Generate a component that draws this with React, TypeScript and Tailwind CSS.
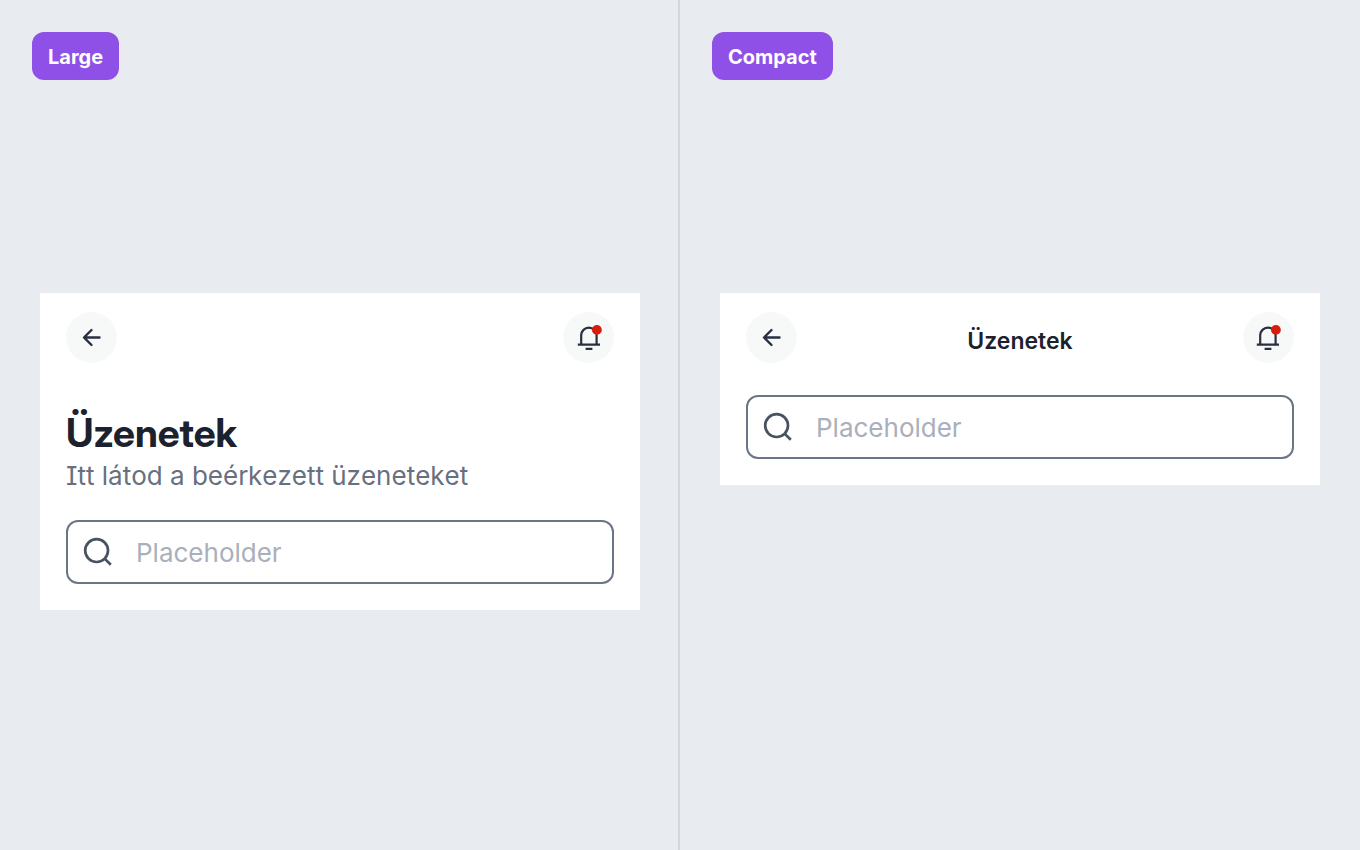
function ArrowLeft() {
  return (
    <svg width="26" height="26" viewBox="0 0 26 26" fill="none" stroke="#272f40" strokeWidth="2.4" strokeLinecap="round" strokeLinejoin="round" aria-hidden="true">
      <path d="M20.5 12.5H5.5M12.5 20L5 12.5L12.5 5" />
    </svg>
  );
}

function Bell() {
  return (
    <svg width="26" height="26" viewBox="0 0 26 26" fill="none" aria-hidden="true">
      <path d="M1.8 19.6H24M5.2 19.6V10.3a7.7 7.7 0 0 1 15.4 0V19.6M9.6 23.9H16.4" stroke="#272f40" strokeWidth="2.2" />
      <circle cx="20.9" cy="4.9" r="4.9" fill="#d91c0b" />
    </svg>
  );
}

function SearchIcon() {
  return (
    <svg width="30" height="30" viewBox="0 0 30 30" fill="none" stroke="#485261" strokeWidth="2.7" aria-hidden="true">
      <circle cx="13.6" cy="13.6" r="11.4" />
      <path d="M21.6 21.6L27.8 27.8" />
    </svg>
  );
}

function Variant({ label, compact }: { label: string; compact?: boolean }) {
  return (
    <section className={compact ? "min-w-0 flex-1 px-8 pt-8" : "min-w-0 flex-1 px-8 pt-8 shadow-[inset_-2px_0_0_#d3d7dd]"}>
      <div className="flex h-12 w-fit items-center rounded-xl bg-[#8f50e8] px-4 pt-px text-xl font-bold text-white">{label}</div>
      <div className="mx-2 mt-[213px] bg-white px-[26px] pt-[19px] pb-[26px]">
        <header className="flex items-center justify-between">
          <button type="button" aria-label="Vissza" className="flex size-[51px] items-center justify-center rounded-full bg-[#f7f9f9]">
            <ArrowLeft />
          </button>
          {compact && <h1 className="pt-1.5 text-[23px] leading-8 font-semibold text-[#1b212d]">Üzenetek</h1>}
          <button type="button" aria-label="Értesítések" className="flex size-[51px] items-center justify-center rounded-full bg-[#f7f9f9]">
            <Bell />
          </button>
        </header>
        {!compact && (
          <div className="mt-[45px]">
            <h1 className="font-['Inter_Display','Inter',sans-serif] text-[39px] leading-[50px] font-bold text-[#1b212d]">Üzenetek</h1>
            <p className="text-[26px] leading-[36px] text-[#667080] [font-feature-settings:'cv08'] [font-kerning:none]">Itt látod a beérkezett üzeneteket</p>
          </div>
        )}
        <label className={compact ? "mt-8 flex h-16 items-center rounded-xl border-2 border-[#6b7586] pr-4 pl-[15px]" : "mt-[26px] flex h-16 items-center rounded-xl border-2 border-[#6b7586] pr-4 pl-[15px]"}>
          <SearchIcon />
          <input type="search" aria-label="Keresés" placeholder="Placeholder" className="ml-[23px] min-w-0 flex-1 bg-transparent text-[26px] outline-none placeholder:text-[#a9afbb]" />
        </label>
      </div>
    </section>
  );
}

export default function App() {
  return (
    <main className="flex min-h-screen bg-[#e8ecf1] font-['Inter',sans-serif]">
      <Variant label="Large" />
      <Variant label="Compact" compact />
    </main>
  );
}
